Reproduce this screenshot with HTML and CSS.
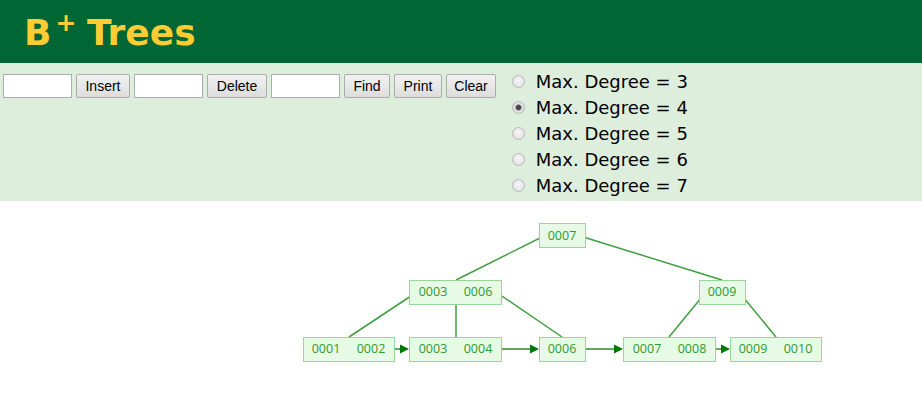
FILE: index.html
```html
<!DOCTYPE html>
<html lang="en">
<head>
    <meta charset="UTF-8">
    <meta name="viewport" content="width=device-width, initial-scale=1.0">
    <title>B+ Trees</title>
    <link rel="stylesheet" href="styles.css">
</head>
<body>
    <header>
        <h1>B<sup>+</sup> Trees</h1>
    </header>

    <div class="controls">
        <div class="actions">
            <input type="text" class="field">
            <button class="btn-insert">Insert</button>
            <input type="text" class="field">
            <button class="btn-delete">Delete</button>
            <input type="text" class="field">
            <button class="btn-find">Find</button>
            <button class="btn-print">Print</button>
            <button class="btn-clear">Clear</button>
        </div>
        <div class="degrees">
            <label><input type="radio" name="degree" value="3"> Max. Degree = 3</label>
            <label><input type="radio" name="degree" value="4" checked> Max. Degree = 4</label>
            <label><input type="radio" name="degree" value="5"> Max. Degree = 5</label>
            <label><input type="radio" name="degree" value="6"> Max. Degree = 6</label>
            <label><input type="radio" name="degree" value="7"> Max. Degree = 7</label>
        </div>
    </div>

    <div class="canvas">
        <svg class="tree" width="922" height="192" viewBox="0 201 922 192">
            <!-- pointers between levels -->
            <g class="edges">
                <line x1="456" y1="280" x2="544" y2="236"/>
                <line x1="580" y1="236" x2="722" y2="280"/>
                <line x1="417" y1="292" x2="349" y2="337"/>
                <line x1="456" y1="292" x2="456" y2="337"/>
                <line x1="496" y1="292" x2="562" y2="337"/>
                <line x1="706" y1="292" x2="669" y2="337"/>
                <line x1="739" y1="292" x2="776" y2="337"/>
            </g>

            <!-- leaf links -->
            <g class="links">
                <line x1="389" y1="349" x2="402" y2="349"/>
                <polygon points="409,349 400,344.5 400,353.5"/>
                <line x1="496" y1="349" x2="532" y2="349"/>
                <polygon points="539,349 530,344.5 530,353.5"/>
                <line x1="580" y1="349" x2="616" y2="349"/>
                <polygon points="623,349 614,344.5 614,353.5"/>
                <line x1="709" y1="349" x2="723" y2="349"/>
                <polygon points="730,349 721,344.5 721,353.5"/>
            </g>

            <g class="nodes">
                <rect x="539.5" y="223.5" width="46" height="24"/>
                <rect x="409.5" y="280.5" width="92" height="24"/>
                <rect x="699.5" y="280.5" width="46" height="24"/>
                <rect x="303.5" y="337.5" width="91" height="24"/>
                <rect x="409.5" y="337.5" width="92" height="24"/>
                <rect x="539.5" y="337.5" width="46" height="24"/>
                <rect x="623.5" y="337.5" width="92" height="24"/>
                <rect x="730.5" y="337.5" width="91" height="24"/>
            </g>

            <g class="keys">
                <text x="562" y="240">0007</text>
                <text x="433" y="296">0003</text>
                <text x="478" y="296">0006</text>
                <text x="722" y="296">0009</text>
                <text x="326" y="353">0001</text>
                <text x="371" y="353">0002</text>
                <text x="433" y="353">0003</text>
                <text x="478" y="353">0004</text>
                <text x="562" y="353">0006</text>
                <text x="647" y="353">0007</text>
                <text x="692" y="353">0008</text>
                <text x="753" y="353">0009</text>
                <text x="798" y="353">0010</text>
            </g>
        </svg>
    </div>
</body>
</html>
```

FILE: styles.css
```css
body {
    margin: 0;
    padding: 0;
    background-color: #FFFFFF;
    font-family: "DejaVu Sans", Verdana, sans-serif;
}
header {
    background: #006633;
    height: 63px;
    box-sizing: border-box;
    padding: 12px 0 0 24px;
}
header h1 {
    margin: 0;
    font-size: 36px;
    line-height: 42px;
    font-weight: bold;
    color: #FFCC33;
}
header sup {
    font-size: 25px;
    line-height: 0;
    vertical-align: 14px;
    margin-left: 4px;
    margin-right: -2px;
}
.controls {
    background: #DDEEDD;
    display: flex;
    gap: 16px;
    height: 138px;
    box-sizing: border-box;
    padding: 5px 0 0 3px;
}
.actions {
    display: flex;
    align-items: flex-start;
    gap: 4px;
    padding-top: 6px;
}
.field {
    width: 69px;
    height: 24px;
    box-sizing: border-box;
    margin: 0;
    padding: 1px 3px;
    border: 1px solid #ABADB3;
    background: #FFFFFF;
    font-family: "Liberation Sans", Arial, sans-serif;
    font-size: 14px;
}
button {
    height: 24px;
    box-sizing: border-box;
    margin: 0;
    padding: 0;
    border: 1px solid #ACACAC;
    border-radius: 2px;
    background: linear-gradient(#F2F2F2, #DDDDDD);
    color: #000000;
    font-family: "Liberation Sans", Arial, sans-serif;
    font-size: 14px;
    text-align: center;
}
.btn-insert { width: 54px; }
.btn-delete { width: 60px; }
.btn-find { width: 46px; }
.btn-print { width: 48px; }
.btn-clear { width: 50px; }
.degrees {
    display: flex;
    flex-direction: column;
}
.degrees label {
    display: flex;
    align-items: center;
    height: 26px;
    font-size: 18px;
    color: #000000;
    white-space: pre;
}
.degrees input {
    appearance: none;
    -webkit-appearance: none;
    width: 13px;
    height: 13px;
    margin: 0 5px 0 0;
    border: 1px solid #B9B9B9;
    border-radius: 50%;
    background: radial-gradient(circle at 50% 40%, #F7F7F7, #DCDCDC);
    box-sizing: border-box;
}
.degrees input:checked {
    background: radial-gradient(circle, #3C3C3C 0, #555555 2.5px, #E6E6E6 3.5px, #D6D6D6 6px);
}
.canvas {
    height: 192px;
}
.tree {
    display: block;
}
.edges line {
    stroke: #3F9F3F;
    stroke-width: 1.5;
}
.links line {
    stroke: #2E8B2E;
    stroke-width: 1.5;
}
.links polygon {
    fill: #007700;
}
.nodes rect {
    fill: #E6FAE6;
    stroke: #99D699;
    stroke-width: 1;
}
.keys text {
    font-family: "Open Sans", "Noto Sans", sans-serif;
    font-size: 12.5px;
    fill: #2F9A2F;
    text-anchor: middle;
}
```
